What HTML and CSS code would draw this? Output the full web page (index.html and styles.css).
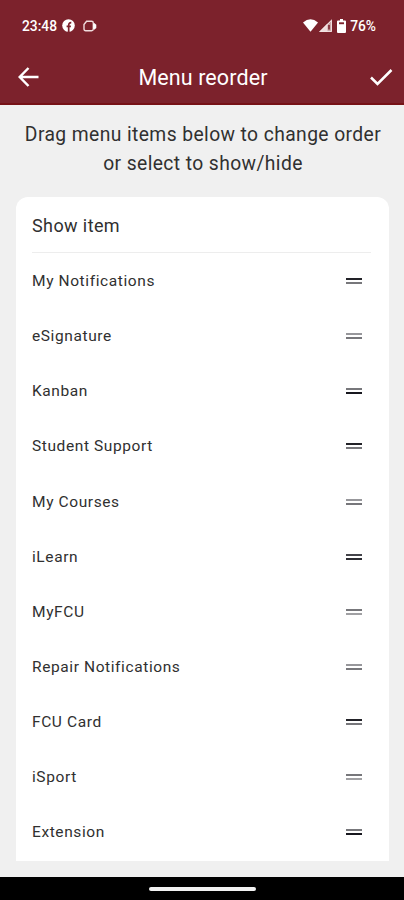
FILE: index.html
```html
<!DOCTYPE html>
<html lang="en">
<head>
    <meta charset="UTF-8">
    <meta name="viewport" content="width=device-width, initial-scale=1.0">
    <title>Menu reorder</title>
    <link rel="stylesheet" href="styles.css">
</head>
<body>
    <header class="header">
        <div class="status-bar">
            <div class="status-left">
                <span class="time">23:48</span>
                <svg class="icon-fb" width="13" height="13" viewBox="0 0 13 13">
                    <circle cx="6.5" cy="6.5" r="6.3" fill="#fff"/>
                    <path d="M6.7 13V6.2c0-1.700.8-2.600 2.600-2.500M4.600 7.400h4.300" fill="none" stroke="#7c222c" stroke-width="1.700"/>
                </svg>
                <svg class="icon-cam" width="14" height="12" viewBox="0 0 14 12">
                    <path d="M1 4.500 3.600 1.300h5q1.700 0 1.700 1.700v6q0 1.700-1.700 1.700H2.700Q1 10.700 1 9z" fill="none" stroke="#f0dcdd" stroke-width="1.400"/>
                    <path d="M10.200 4 11.300 3l2 1.700v3.300l-2 1.700-1.100-1z" fill="#fff"/>
                </svg>
            </div>
            <div class="status-right">
                <svg width="15" height="13" viewBox="0 0 15 13">
                    <path d="M0 3.600Q7.500-3.200 15 3.600L7.500 12.800z" fill="#fff"/>
                </svg>
                <svg class="icon-signal" width="13" height="13" viewBox="0 0 13 13">
                    <path d="M0 13 13 0v13z" fill="#c9a3a5"/>
                    <path d="M0 13 8.500 4.500V13z" fill="#eedcdc"/>
                    <path d="M1.500 12.400H12.400V1.500z" fill="none" stroke="#f3e4e4"/>
                    <path d="M10 6v4.500" stroke="#7c222c" stroke-width="1.600"/>
                </svg>
                <svg class="icon-battery" width="9" height="14" viewBox="0 0 9 14">
                    <path d="M3 0h3v1.500h2q1 0 1 1V13q0 1-1 1H1q-1 0-1-1V2.500q0-1 1-1h2z" fill="#fff"/>
                    <path d="M2 3.300h5v1.900H2z" fill="#7c222c"/>
                </svg>
                <span class="percent">76%</span>
            </div>
        </div>
        <div class="app-bar">
            <svg width="22" height="20" viewBox="0 0 22 20">
                <path d="M20.500 10H2M10.500 1 1.700 10l8.800 9" fill="none" stroke="#fff" stroke-width="2.500"/>
            </svg>
            <h1>Menu reorder</h1>
            <svg width="23" height="18" viewBox="0 0 23 18">
                <path d="M1 9.500 7.500 16 21.500 2" fill="none" stroke="#fff" stroke-width="2.500"/>
            </svg>
        </div>
    </header>

    <main class="content">
        <p class="hint">Drag menu items below to change order<br>or select to show/hide</p>

        <section class="card">
            <h2>Show item</h2>
            <ul class="menu-list">
                <li><span>My Notifications</span><i class="handle top"></i></li>
                <li><span>eSignature</span><i class="handle light"></i></li>
                <li><span>Kanban</span><i class="handle bottom"></i></li>
                <li><span>Student Support</span><i class="handle top"></i></li>
                <li><span>My Courses</span><i class="handle light"></i></li>
                <li><span>iLearn</span><i class="handle dark"></i></li>
                <li><span>MyFCU</span><i class="handle fade"></i></li>
                <li><span>Repair Notifications</span><i class="handle light"></i></li>
                <li><span>FCU Card</span><i class="handle top"></i></li>
                <li><span>iSport</span><i class="handle fade"></i></li>
                <li><span>Extension</span><i class="handle bottom"></i></li>
            </ul>
        </section>
    </main>

    <footer class="nav-bar"><div class="nav-pill"></div></footer>
</body>
</html>
```
FILE: styles.css
```css
* {
    margin: 0;
    padding: 0;
    box-sizing: border-box;
}

body {
    height: 900px;
    display: flex;
    flex-direction: column;
    background-color: #f0f0f0;
    font-family: Roboto, "Liberation Sans", sans-serif;
    color: #303030;
    overflow: hidden;
}

svg {
    display: block;
    flex: none;
}

.header {
    height: 105px;
    background-color: #7c222c;
    border-bottom: 2px solid #761217;
    color: #fff;
}

.status-bar {
    height: 50px;
    padding: 1px 28px 0 22px;
    display: flex;
    justify-content: space-between;
    align-items: center;
    font-size: 13.800px;
    font-weight: 500;
}

.status-left,
.status-right {
    display: flex;
    align-items: center;
}

.icon-fb {
    margin-left: 5px;
}

.icon-cam {
    margin-left: 8px;
}

.icon-signal {
    margin-left: 1px;
}

.icon-battery {
    margin: 0 4px 0 5px;
}

.app-bar {
    height: 54px;
    padding: 0 11px 0 18px;
    display: flex;
    justify-content: space-between;
    align-items: center;
}

.app-bar h1 {
    margin-right: 4px;
    font-size: 21.500px;
    font-weight: 400;
    letter-spacing: 0.1px;
}

.content {
    flex: 1;
    padding: 16px 15px 0 16px;
}

.hint {
    padding-left: 1px;
    font-size: 19.300px;
    line-height: 28.500px;
    letter-spacing: 0.400px;
    text-align: center;
    white-space: nowrap;
}

.card {
    height: 664px;
    margin-top: 19px;
    padding: 0 18px 0 16px;
    background-color: #fff;
    border-radius: 12px 12px 0 0;
}

.card h2 {
    height: 56px;
    line-height: 58px;
    border-bottom: 1px solid #ededed;
    font-size: 18px;
    font-weight: 400;
    letter-spacing: 0.4px;
}

.menu-list {
    padding-top: 0.600px;
    list-style: none;
}

.menu-list li {
    height: 55.100px;
    padding-right: 9px;
    display: flex;
    justify-content: space-between;
    align-items: center;
    font-size: 15.500px;
    letter-spacing: 0.600px;
}

/* two-line drag handle */
.handle {
    width: 16px;
    height: 6px;
    border-top: 2px solid #55555b;
    border-bottom: 2px solid #55555b;
}

.handle.top {
    border-top-color: #222228;
    border-bottom-color: #77777b;
}

.handle.bottom {
    border-top-color: #77777b;
    border-bottom-color: #18181f;
}

.handle.dark {
    border-top-color: #44444a;
    border-bottom-color: #2c2c32;
}

.handle.light {
    border-top-color: #97979b;
    border-bottom-color: #77777b;
}

.handle.fade {
    border-top-color: #77777b;
    border-bottom-color: #a0a0a3;
}

.nav-bar {
    height: 23px;
    background-color: #000;
    display: flex;
    justify-content: center;
    align-items: center;
}

.nav-pill {
    width: 107px;
    height: 4px;
    border-radius: 2px;
    background-color: #f2f2f2;
}
```
